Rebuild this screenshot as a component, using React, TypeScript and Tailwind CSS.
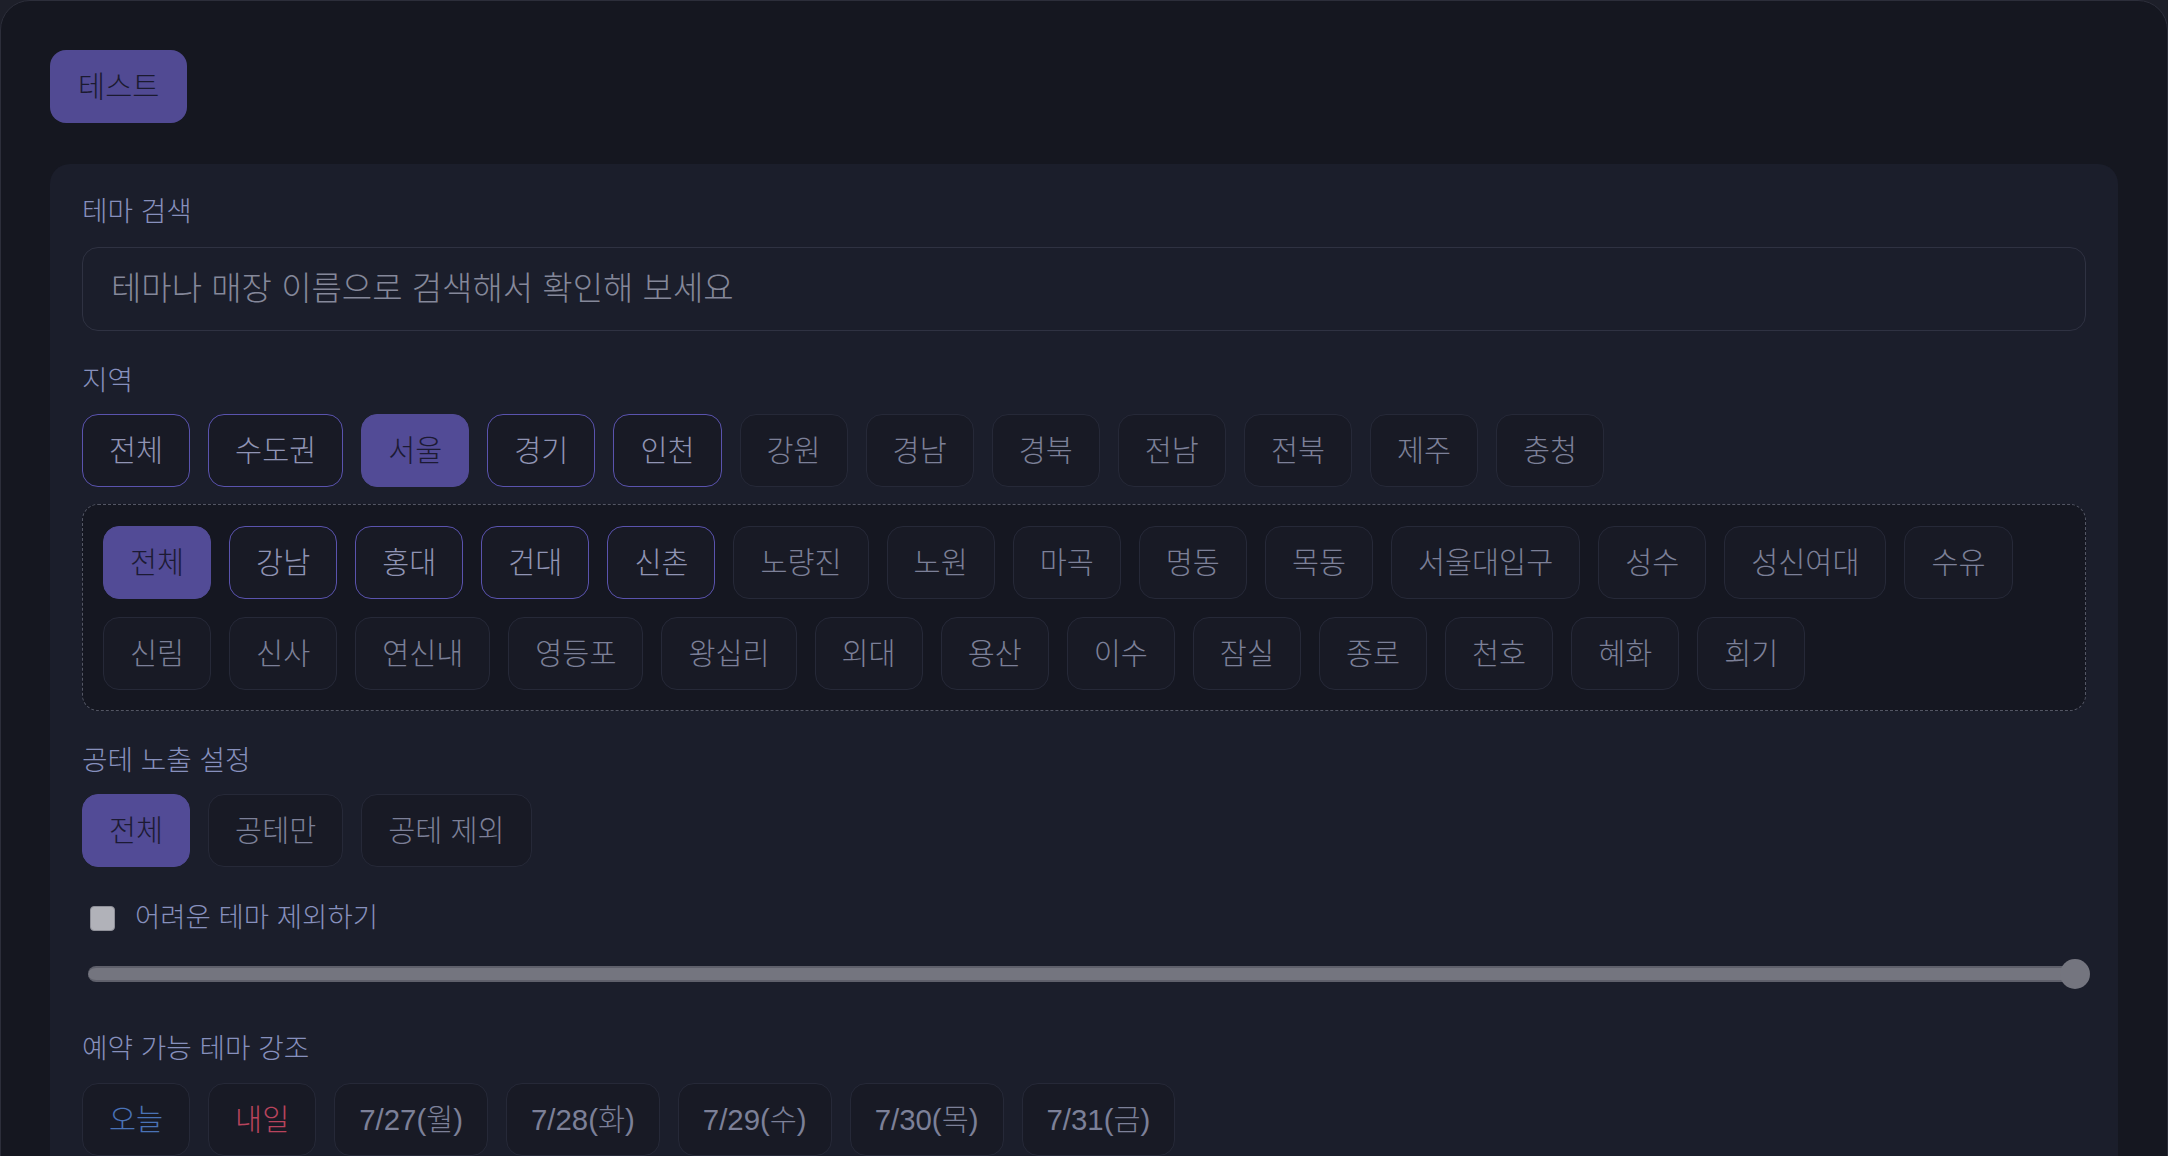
import { useState } from 'react';

type ChipTone = 'active' | 'outline' | 'plain';

const regions: { label: string; tone: ChipTone }[] = [
  { label: '전체', tone: 'outline' },
  { label: '수도권', tone: 'outline' },
  { label: '서울', tone: 'active' },
  { label: '경기', tone: 'outline' },
  { label: '인천', tone: 'outline' },
  { label: '강원', tone: 'plain' },
  { label: '경남', tone: 'plain' },
  { label: '경북', tone: 'plain' },
  { label: '전남', tone: 'plain' },
  { label: '전북', tone: 'plain' },
  { label: '제주', tone: 'plain' },
  { label: '충청', tone: 'plain' },
];

const seoulAreas: { label: string; tone: ChipTone }[] = [
  { label: '전체', tone: 'active' },
  { label: '강남', tone: 'outline' },
  { label: '홍대', tone: 'outline' },
  { label: '건대', tone: 'outline' },
  { label: '신촌', tone: 'outline' },
  ...[
    '노량진', '노원', '마곡', '명동', '목동', '서울대입구', '성수', '성신여대', '수유',
    '신림', '신사', '연신내', '영등포', '왕십리', '외대', '용산', '이수', '잠실', '종로',
    '천호', '혜화', '회기',
  ].map((label) => ({ label, tone: 'plain' as ChipTone })),
];

const dates = ['7/27(월)', '7/28(화)', '7/29(수)', '7/30(목)', '7/31(금)'];

const toneClass: Record<ChipTone, string> = {
  active: 'bg-[#524b96] border-[#524b96] text-[#1c1a33]',
  outline: 'bg-[#181a25] border-[#5a53ae] text-[#9094b4]',
  plain: 'bg-[#181a25] border-[#262938] text-[#7c8098]',
};

function Chip({ label, tone, className = 'px-[26px]' }: { label: string; tone: ChipTone; className?: string }) {
  return (
    <button
      className={`h-[73px] rounded-[16px] border text-[29.4px] font-light leading-none whitespace-nowrap ${toneClass[tone]} ${className}`}
    >
      {label}
    </button>
  );
}

function SectionLabel({ children }: { children: React.ReactNode }) {
  return <div className="text-[27.75px] font-light leading-[36px] text-[#8790bd]">{children}</div>;
}

export default function App() {
  const [query, setQuery] = useState('');

  return (
    <div className="min-h-screen bg-[#1d1f29] font-['Liberation_Sans','Noto_Sans_CJK_KR',sans-serif]">
      <div className="min-h-[1300px] rounded-[30px] border border-[#2c2e3a] bg-[#151720] p-[49px]">
        <button className="h-[73px] px-[28px] rounded-[16px] bg-[#514a93] text-[29.5px] font-light leading-none text-[#1b1a30]">
          테스트
        </button>

        <div className="mt-[41px] rounded-[20px] bg-[#1b1e2b] px-[32px] pt-[30px] pb-[40px] flex flex-col">
          <SectionLabel>테마 검색</SectionLabel>
          <input
            value={query}
            onChange={(e) => setQuery(e.target.value)}
            placeholder="테마나 매장 이름으로 검색해서 확인해 보세요"
            className="mt-[17px] h-[84px] w-full rounded-[16px] border border-[#2f3242] bg-[#1b1e2b] pl-[28px] text-[33px] font-light text-[#c8cad6] placeholder:text-[#85889a] outline-none"
          />

          <div className="mt-[32px]">
            <SectionLabel>지역</SectionLabel>
          </div>
          <div className="mt-[15px] flex flex-wrap gap-[18px]">
            {regions.map((r) => (
              <Chip key={r.label} label={r.label} tone={r.tone} />
            ))}
          </div>

          <div className="mt-[17px] rounded-[16px] border border-dashed border-[#535664] bg-[#151721] px-[20px] pt-[21px] pb-[20px] flex flex-wrap gap-[18px]">
            {seoulAreas.map((a) => (
              <Chip key={a.label} label={a.label} tone={a.tone} />
            ))}
          </div>

          <div className="mt-[32px]">
            <SectionLabel>공테 노출 설정</SectionLabel>
          </div>
          <div className="mt-[15px] flex gap-[18px]">
            <Chip label="전체" tone="active" />
            <Chip label="공테만" tone="plain" />
            <Chip label="공테 제외" tone="plain" />
          </div>

          {/* difficulty filter */}
          <label className="mt-[33px] flex items-center gap-[20px] pl-[8px]">
            <span className="w-[25px] h-[25px] rounded-[4px] border border-[#8e8f98] bg-[#b1b2b9]" />
            <span className="text-[27.5px] font-light leading-[36px] text-[#8790bd]">어려운 테마 제외하기</span>
          </label>

          <div className="mt-[23px] ml-[6px] mr-[-4px] relative h-[30px] flex items-center">
            <div className="h-[16px] w-full mr-[15px] rounded-full bg-[#74757f] border-y-2 border-[#5f606b]" />
            <div className="absolute right-0 top-0 w-[30px] h-[30px] rounded-full bg-[#74757f]" />
          </div>

          <div className="mt-[42px]">
            <SectionLabel>예약 가능 테마 강조</SectionLabel>
          </div>
          <div className="mt-[16px] flex gap-[18px]">
            <button className="h-[73px] px-[26px] rounded-[16px] border border-[#262938] bg-[#181a25] text-[29.4px] font-light leading-none text-[#4a72b6]">
              오늘
            </button>
            <button className="h-[73px] px-[26px] rounded-[16px] border border-[#262938] bg-[#181a25] text-[29.4px] font-light leading-none text-[#b8445d]">
              내일
            </button>
            {dates.map((d) => (
              <Chip key={d} label={d} tone="plain" className="px-[24px]" />
            ))}
          </div>
        </div>
      </div>
    </div>
  );
}
